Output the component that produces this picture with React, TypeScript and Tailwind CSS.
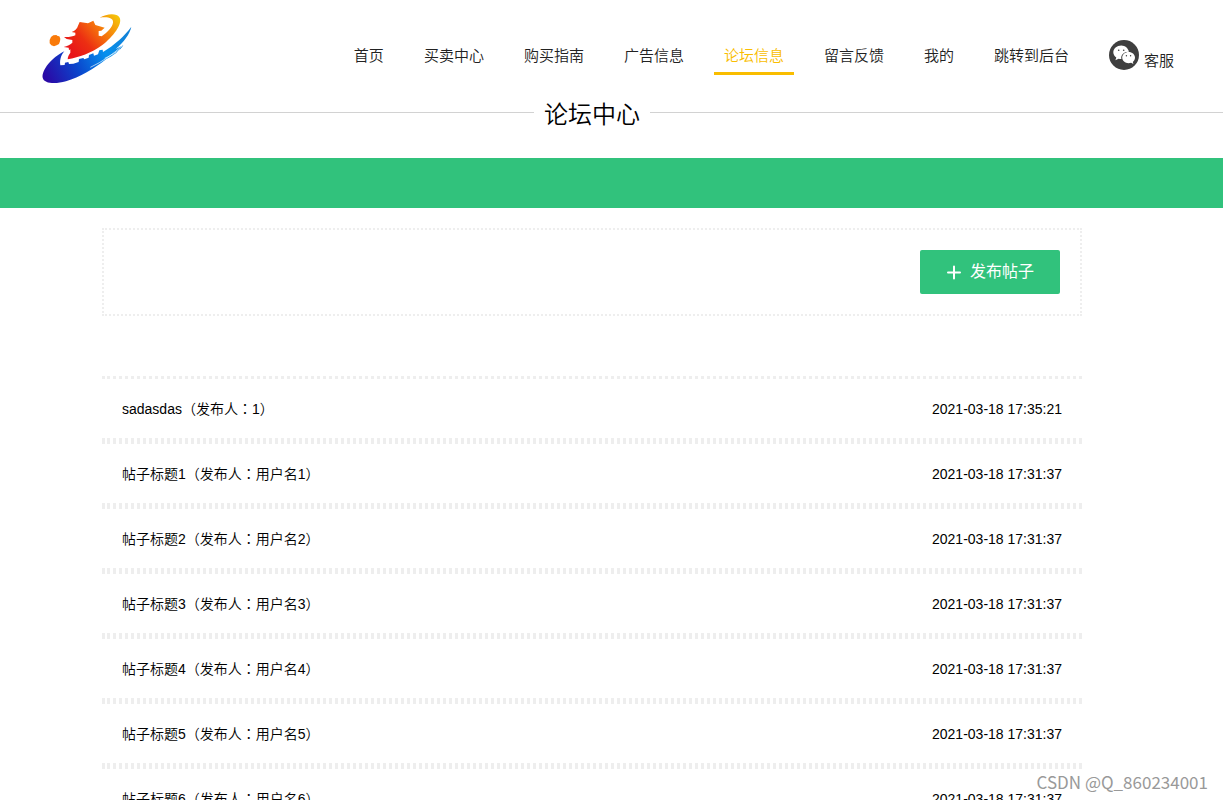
import React from "react";

const navItems = ["首页", "买卖中心", "购买指南", "广告信息", "论坛信息", "留言反馈", "我的", "跳转到后台"];
const activeItem = "论坛信息";

type Post = { title: string; author: string; time: string };

const posts: Post[] = [
  { title: "sadasdas", author: "1", time: "2021-03-18 17:35:21" },
  { title: "帖子标题1", author: "用户名1", time: "2021-03-18 17:31:37" },
  { title: "帖子标题2", author: "用户名2", time: "2021-03-18 17:31:37" },
  { title: "帖子标题3", author: "用户名3", time: "2021-03-18 17:31:37" },
  { title: "帖子标题4", author: "用户名4", time: "2021-03-18 17:31:37" },
  { title: "帖子标题5", author: "用户名5", time: "2021-03-18 17:31:37" },
  { title: "帖子标题6", author: "用户名6", time: "2021-03-18 17:31:37" },
];

function Logo() {
  return (
    <svg viewBox="0 0 345 270" className="h-[90px] w-[115px] shrink-0" role="img" aria-label="logo">
      <defs>
        <linearGradient id="warm" gradientUnits="userSpaceOnUse" x1="130" y1="150" x2="265" y2="35">
          <stop offset="0" stopColor="#e8141a" />
          <stop offset="0.3" stopColor="#ec2f12" />
          <stop offset="0.6" stopColor="#f5700c" />
          <stop offset="1" stopColor="#f5c60a" />
        </linearGradient>
        <linearGradient id="cool" gradientUnits="userSpaceOnUse" x1="45" y1="210" x2="290" y2="90">
          <stop offset="0" stopColor="#2a0aa6" />
          <stop offset="0.35" stopColor="#0b45cc" />
          <stop offset="0.7" stopColor="#0590ee" />
          <stop offset="1" stopColor="#1182d8" />
        </linearGradient>
      </defs>
      <path
        fill="#f97a0a"
        d="M70 91 L79 90 L83 93 L88 94 L91 101 L90 109 L87 117 L80 121 L72 124 L64 121 L59 115 L59 105 L63 96 Z"
      />
      <path
        fill="url(#warm)"
        d="M209 38 C230 26 260 23 269 38 C278 58 250 94 216 121 C184 144 148 157 113 163 C113 155 117 149 121 143 L121 133 L117 136 L116 128 L101 126 C112 122 122 119 127 113 L127 105 L110 102 L102 96 C114 97 128 95 136 91 L136 83 L125 81 C135 77 142 70 144 62 L149 51 L174 55 L190 47 L196 60 L224 68 L214 77 L206 78 L206 92 L215 94 C232 82 247 66 249 53 C251 37 230 35 209 38 Z"
      />
      <path
        fill="url(#cool)"
        d="M103 139 C91 153 89 168 91 181 L104 180 L105 173 L115 171 L117 177 L130 176 L146 171 L147 162 L160 159 L163 163 L176 158 L177 150 L190 145 L192 152 L204 148 L208 136 L218 134 L219 141 C254 120 284 92 304 65 C300 87 281 111 257 132 L280 121 C269 138 251 151 228 163 C193 190 149 218 108 229 C75 238 42 236 38 218 C35 196 64 158 103 139 Z"
      />
      <path fill="none" stroke="#ffffff" strokeWidth="2" d="M181 187 C218 170 248 148 276 123 M224 160 C243 151 259 142 270 133" />
    </svg>
  );
}

function WeChatIcon() {
  return (
    <svg viewBox="0 0 30 30" className="size-[30px] shrink-0" aria-hidden="true">
      <circle cx="15" cy="15" r="15" fill="#3f3f3f" />
      <path
        fill="#fff"
        d="M12.3 5.4c-4.5 0-8 3-8 6.8 0 2.2 1.2 4 3 5.3l-.9 2.8 3.2-1.6c.9.3 1.8.4 2.8.4-.9-4 2.5-7.4 7.6-7.3-.7-3.6-3.9-6.4-7.7-6.4z"
      />
      <path
        fill="#fff"
        d="M26 17.5c0-3.2-2.9-5.6-6.4-5.6s-6.4 2.4-6.4 5.6 2.9 5.7 6.4 5.7c.8 0 1.7-.2 2.5-.4l2.3 1.3-.6-2.2c1.4-1 2.2-2.6 2.2-4.4z"
      />
      <g fill="#3f3f3f">
        <circle cx="9.7" cy="10.3" r="0.8" />
        <circle cx="14.7" cy="10.3" r="0.8" />
        <circle cx="17.4" cy="15.8" r="0.7" />
        <circle cx="21.6" cy="15.8" r="0.7" />
      </g>
    </svg>
  );
}

export default function App() {
  return (
    <div className="relative h-screen overflow-hidden bg-white font-['Liberation_Sans','Noto_Sans_CJK_SC',sans-serif] text-sm text-black">
      <header className="flex items-start justify-between pt-[5px] pr-[39px] pl-[30px]">
        <Logo />
        <nav className="flex items-start gap-5 pt-[35px] font-['Noto_Sans_CJK_SC_DemiLight','Noto_Sans_CJK_SC',sans-serif] text-[15px] leading-[30px] font-[350] text-[#222]">
          {navItems.map((item) => (
            <a
              key={item}
              href="#"
              className={
                item === activeItem
                  ? "border-b-3 border-[#f9bd00] px-2.5 pb-0.5 whitespace-nowrap text-[#f9bd00]"
                  : "px-2.5 whitespace-nowrap"
              }
            >
              {item}
            </a>
          ))}
          <a href="#" className="flex items-start gap-[5px] px-2.5 whitespace-nowrap">
            <WeChatIcon />
            <span className="pt-[5px]">客服</span>
          </a>
        </nav>
      </header>

      <div className="flex items-center">
        <span className="h-px flex-1 bg-[#d2d2d2]" />
        <h1 className="px-2.5 pt-1 pb-0.5 font-['Noto_Sans_CJK_SC_DemiLight','Noto_Sans_CJK_SC',sans-serif] text-2xl leading-7 font-[350]">
          论坛中心
        </h1>
        <span className="h-px flex-1 bg-[#d2d2d2]" />
        <span className="h-px w-[39px] bg-[#d2d2d2]" />
      </div>

      <div className="mt-[29px] h-[50px] bg-[#31c27c]" />

      <main className="pt-5 pr-[39px]">
        <div className="mx-auto max-w-[980px]">
          <div className="flex justify-end border-2 border-dotted border-[#eee] p-5">
            <button
              type="button"
              className="flex h-11 w-[140px] items-center justify-center gap-2 rounded-xs bg-[#31c27c] text-base text-white"
            >
              <svg viewBox="0 0 16 16" className="size-4" aria-hidden="true">
                <path d="M8 2.5v12M2 8.5h12" stroke="#fff" strokeWidth="2" strokeLinecap="round" />
              </svg>
              发布帖子
            </button>
          </div>

          <ul className="mt-[60px]">
            {posts.map((post) => (
              <li key={post.title} className="border-y-3 border-dotted border-[#eee]">
                <a href="#" className="flex h-[59px] items-center justify-between px-5 font-[350]">
                  <span>
                    {post.title}
                    <span lang="zh-Hant" className="font-['Noto_Sans_CJK_TC',sans-serif]">（</span>
                    发布人
                    <span lang="zh-Hant" className="font-['Noto_Sans_CJK_TC',sans-serif]">：</span>
                    {post.author}
                    <span lang="zh-Hant" className="font-['Noto_Sans_CJK_TC',sans-serif]">）</span>
                  </span>
                  <time>{post.time}</time>
                </a>
              </li>
            ))}
          </ul>
        </div>
      </main>

      <p className="absolute right-[15px] bottom-1.5 font-['Noto_Sans_CJK_SC',sans-serif] text-[17px] leading-6 text-[#999]">
        CSDN @Q_860234001
      </p>
    </div>
  );
}
